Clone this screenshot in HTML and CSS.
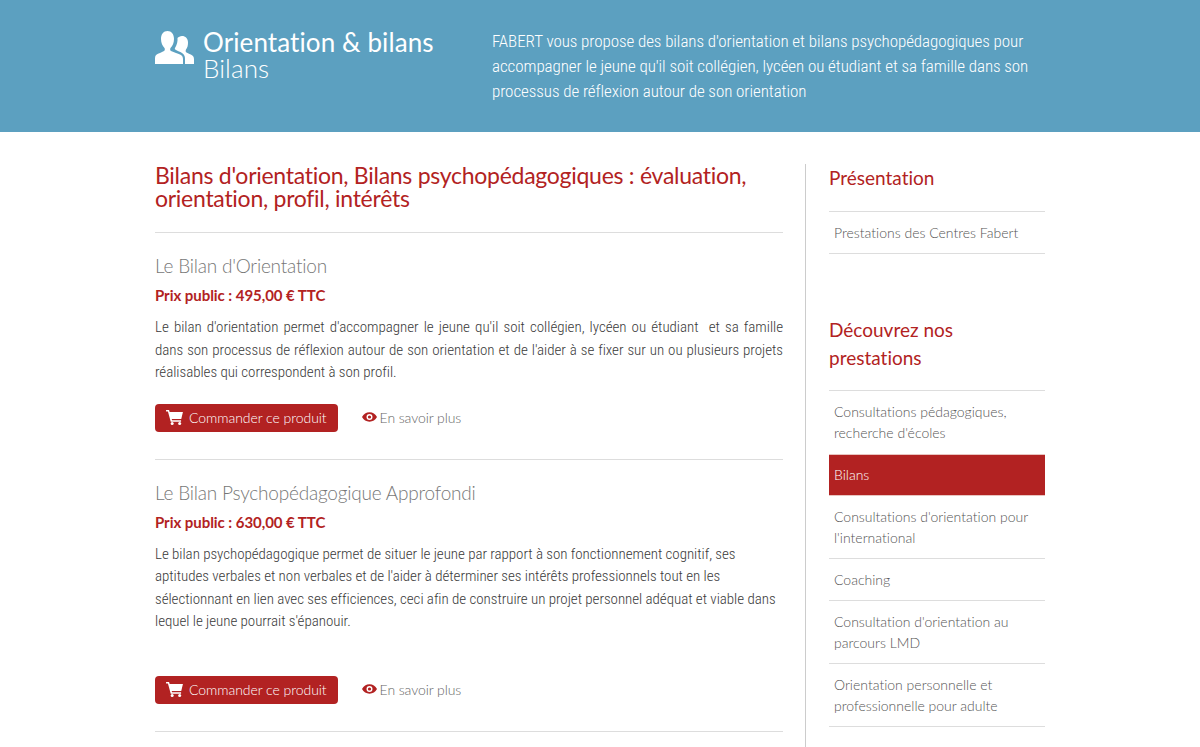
FILE: index.html
```html
<!DOCTYPE html>
<html lang="fr">
<head>
  <meta charset="UTF-8">
  <title>Orientation &amp; bilans - Bilans</title>
  <link rel="stylesheet" href="styles.css">
</head>
<body>
  <header class="banner">
    <div class="wrap banner-inner">
      <div class="banner-title">
        <svg class="users-icon" viewBox="0 0 39 33" width="39" height="33" aria-hidden="true">
          <path fill="#fff" d="M0 33V27C0 24 2 23 5 22L9 20C10 19.500 10 18 9.500 17C7.500 15 6 12 6 8C6 3 8.500 0 12.500 0C16.500 0 19 3 19 8C19 12 17.500 15 15.500 17C15 18 15 19.500 16 20L21 22C25 23.500 28 24 28 28V33Z"/>
          <path fill="#fff" d="M30 33H39V28C39 25 37 24 34.500 23L31.500 21.500C30.500 21 30.500 19.500 31 18.500C32.500 16.500 33 14.500 33 11.500C33 7.500 30.500 5 27 5C25 5 23.500 6 22.500 7C22.800 10 22 14 20 17C19.500 18 20 18.500 21 19L24 20.500C28 22 30 24 30 28Z"/>
        </svg>
        <div>
          <h2 class="section-name">Orientation &amp; bilans</h2>
          <div class="page-name">Bilans</div>
        </div>
      </div>
      <p class="banner-text">FABERT vous propose des bilans d'orientation et bilans psychopédagogiques pour accompagner le jeune qu'il soit collégien, lycéen ou étudiant et sa famille dans son processus de réflexion autour de son orientation</p>
    </div>
  </header>

  <div class="wrap page">
    <main class="content">
      <h1 class="page-title">Bilans d'orientation, Bilans psychopédagogiques : évaluation, orientation, profil, intérêts</h1>

      <article class="product">
        <h3 class="product-name">Le Bilan d'Orientation</h3>
        <div class="price">Prix public : 495,00 € TTC</div>
        <p class="desc">Le bilan d'orientation permet d'accompagner le jeune qu'il soit collégien, lycéen ou étudiant&nbsp; et sa famille dans son processus de réflexion autour de son orientation et de l'aider à se fixer sur un ou plusieurs projets réalisables qui correspondent à son profil.</p>
        <div class="actions">
          <a class="btn" href="#">
            <svg class="cart-icon" viewBox="0 0 18 16" width="17" height="15" aria-hidden="true"><path fill="#fff" d="M0 0h3.200l.6 2H18l-1.800 7.500H6l.4 1.500H16v1.600H5L2 1.600H0z"/><circle fill="#fff" cx="6.500" cy="14.400" r="1.600"/><circle fill="#fff" cx="14.500" cy="14.400" r="1.600"/></svg>
            Commander ce produit
          </a>
          <a class="more" href="#">
            <svg class="eye-icon" viewBox="0 0 16 10" width="15" height="10" aria-hidden="true"><path fill-rule="evenodd" fill="#b22222" d="M8 0c3.500 0 6.300 2 8 5-1.700 3-4.500 5-8 5S1.700 8 0 5c1.700-3 4.500-5 8-5zm0 1.800a3.200 3.200 0 1 0 0 6.400 3.200 3.200 0 0 0 0-6.400zm0 1.500a1.700 1.700 0 1 1 0 3.400 1.700 1.700 0 0 1 0-3.400z"/></svg>
            En savoir plus
          </a>
        </div>
      </article>

      <article class="product">
        <h3 class="product-name">Le Bilan Psychopédagogique Approfondi</h3>
        <div class="price">Prix public : 630,00 € TTC</div>
        <p class="desc left">Le bilan psychopédagogique permet de situer le jeune par rapport à son fonctionnement cognitif, ses aptitudes verbales et non verbales et de l'aider à déterminer ses intérêts professionnels tout en les sélectionnant en lien avec ses efficiences, ceci afin de construire un projet personnel adéquat et viable dans lequel le jeune pourrait s'épanouir.</p>
        <div class="actions">
          <a class="btn" href="#">
            <svg class="cart-icon" viewBox="0 0 18 16" width="17" height="15" aria-hidden="true"><path fill="#fff" d="M0 0h3.200l.6 2H18l-1.800 7.500H6l.4 1.500H16v1.600H5L2 1.600H0z"/><circle fill="#fff" cx="6.500" cy="14.400" r="1.600"/><circle fill="#fff" cx="14.500" cy="14.400" r="1.600"/></svg>
            Commander ce produit
          </a>
          <a class="more" href="#">
            <svg class="eye-icon" viewBox="0 0 16 10" width="15" height="10" aria-hidden="true"><path fill-rule="evenodd" fill="#b22222" d="M8 0c3.500 0 6.300 2 8 5-1.700 3-4.500 5-8 5S1.700 8 0 5c1.700-3 4.500-5 8-5zm0 1.800a3.200 3.200 0 1 0 0 6.400 3.200 3.200 0 0 0 0-6.400zm0 1.500a1.700 1.700 0 1 1 0 3.400 1.700 1.700 0 0 1 0-3.400z"/></svg>
            En savoir plus
          </a>
        </div>
      </article>
    </main>

    <aside class="sidebar">
      <h4 class="side-title">Présentation</h4>
      <ul class="side-menu">
        <li><a href="#">Prestations des Centres Fabert</a></li>
      </ul>

      <h4 class="side-title second">Découvrez nos prestations</h4>
      <ul class="side-menu">
        <li><a href="#">Consultations pédagogiques, recherche d'écoles</a></li>
        <li class="active"><a href="#">Bilans</a></li>
        <li><a href="#">Consultations d'orientation pour l'international</a></li>
        <li><a href="#">Coaching</a></li>
        <li><a href="#">Consultation d'orientation au parcours LMD</a></li>
        <li><a href="#">Orientation personnelle et professionnelle pour adulte</a></li>
      </ul>
    </aside>
  </div>
</body>
</html>
```

FILE: styles.css
```css
/* Page */
body {
  margin: 0;
  background-color: #fff;
  color: #555;
  font-family: 'Lato', sans-serif;
  font-variant-ligatures: none;
}

.wrap {
  width: 890px;
  margin: 0 auto;
}

a {
  text-decoration: none;
}

/* Blue banner */
.banner {
  height: 132px;
  background-color: #5ca0c0;
  color: #fff;
}

.banner-inner {
  display: flex;
}

.banner-title {
  display: flex;
  width: 337px;
  padding-top: 28px;
}

.users-icon {
  margin: 3px 9px 0 0;
}

.section-name {
  margin: 0;
  font-size: 26px;
  font-weight: 400;
  line-height: 28px;
  letter-spacing: 0.1px;
}

.page-name {
  font-size: 26px;
  font-weight: 300;
  line-height: 24px;
  letter-spacing: 0.1px;
}

.banner-text {
  margin: 0;
  width: 553px;
  padding-top: 29px;
  font-family: 'Roboto', sans-serif;
  font-size: 17px;
  font-weight: 300;
  line-height: 25px;
  font-stretch: condensed;
  letter-spacing: -0.07px;
}

/* Main column */
.page {
  display: flex;
  padding-top: 32px;
}

.content {
  width: 628px;
}

.page-title {
  margin: 0;
  padding-bottom: 22px;
  color: #b22222;
  font-size: 23px;
  font-weight: 400;
  line-height: 23px;
  letter-spacing: -0.27px;
}

.product {
  border-top: 1px solid #ddd;
  padding: 21px 0 27px;
}

.product:last-child {
  border-bottom: 1px solid #ddd;
}

.product-name {
  margin: 0;
  color: #777;
  font-size: 19px;
  font-weight: 300;
  line-height: 24px;
  letter-spacing: -0.2px;
}

.price {
  margin-top: 5px;
  color: #b22222;
  font-size: 15px;
  font-weight: 700;
  line-height: 24px;
  letter-spacing: -0.05px;
}

.desc {
  margin: 9px 0 20px;
  color: #3a3a3a;
  font-family: 'Roboto', sans-serif;
  font-size: 15px;
  font-weight: 300;
  line-height: 22.500px;
  font-stretch: condensed;
  letter-spacing: -0.04px;
  text-align: justify;
}

.desc.left {
  margin-bottom: 43px;
  text-align: left;
}

.actions {
  display: flex;
  align-items: center;
}

.btn {
  display: flex;
  align-items: center;
  gap: 6px;
  box-sizing: border-box;
  height: 28px;
  padding: 0 11px 1px;
  border-radius: 4px;
  background-color: #b22222;
  color: #fff;
  font-size: 14px;
  font-weight: 300;
  letter-spacing: -0.05px;
}

.more {
  display: flex;
  align-items: center;
  gap: 3px;
  margin-left: 24px;
  padding-bottom: 1px;
  color: #666;
  font-size: 14px;
  font-weight: 300;
  letter-spacing: -0.08px;
}

/* Sidebar */
.sidebar {
  width: 216px;
  margin-left: 22px;
  padding: 0 0 40px 23px;
  border-left: 1px solid #ccc;
}

.side-title {
  margin: 0;
  padding-bottom: 19px;
  color: #b22222;
  font-size: 19px;
  font-weight: 400;
  line-height: 28px;
}

.side-title.second {
  margin-top: 62px;
  padding-bottom: 18px;
}

.side-menu {
  margin: 0;
  padding: 0;
  list-style: none;
  border-top: 1px solid #ddd;
}

.side-menu li {
  border-bottom: 1px solid #ddd;
}

.side-menu a {
  display: block;
  padding: 10px 5px;
  color: #555;
  font-size: 14px;
  font-weight: 300;
  line-height: 21px;
}

.side-menu li:has(+ .active) {
  border-bottom-color: transparent;
}

.side-menu .active {
  border-top: 1px solid #e8c4c0;
  border-bottom-color: #e8c4c0;
}

.side-menu .active a {
  padding: 9px 5px 10px;
  background-color: #b22222;
  color: #fff;
}
```
